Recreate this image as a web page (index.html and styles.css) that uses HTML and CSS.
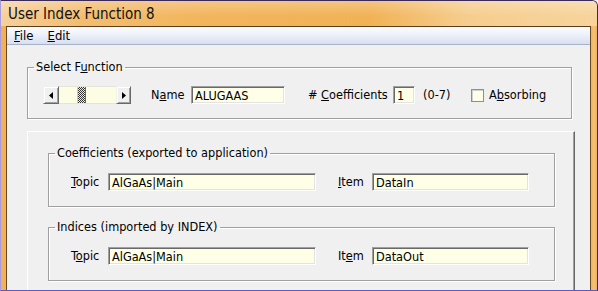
FILE: index.html
```html
<!DOCTYPE html>
<html>
<head>
<meta charset="utf-8">
<link rel="stylesheet" href="styles.css">
</head>
<body>
<div class="window">
  <div class="titlebar">User Index Function 8</div>
  <div class="frame">
    <div class="client">
      <div class="menubar">
        <span class="menu"><u>F</u>ile</span>
        <span class="menu"><u>E</u>dit</span>
      </div>
      <div class="content">
        <fieldset class="group select-group">
          <legend>Select F<u>u</u>nction</legend>
          <div class="row select-row">
            <div class="scrollbar">
              <div class="sb-btn sb-left"><svg width="4" height="7" viewBox="0 0 4 7"><path d="M4 0V7L0 3.5Z" fill="#000"/></svg></div>
              <div class="sb-track"><div class="sb-thumb"></div></div>
              <div class="sb-btn sb-right"><svg width="4" height="7" viewBox="0 0 4 7"><path d="M0 0V7L4 3.5Z" fill="#000"/></svg></div>
            </div>
            <span class="lbl lbl-name">N<u>a</u>me</span>
            <div class="field f-name">ALUGAAS</div>
            <span class="lbl lbl-coef"># <u>C</u>oefficients</span>
            <div class="field f-coef">1</div>
            <span class="lbl lbl-range">(0-7)</span>
            <span class="checkbox"></span>
            <span class="lbl lbl-abs">A<u>b</u>sorbing</span>
          </div>
        </fieldset>
        <div class="panel">
          <fieldset class="group sub-group">
            <legend>Coefficients (exported to application)</legend>
            <div class="row sub-row">
              <span class="lbl lbl-topic"><u>T</u>opic</span>
              <div class="field f-topic">AlGaAs|Main</div>
              <span class="lbl lbl-item"><u>I</u>tem</span>
              <div class="field f-item">DataIn</div>
            </div>
          </fieldset>
          <fieldset class="group sub-group second">
            <legend>Indices (imported by INDEX)</legend>
            <div class="row sub-row">
              <span class="lbl lbl-topic">T<u>o</u>pic</span>
              <div class="field f-topic">AlGaAs|Main</div>
              <span class="lbl lbl-item">It<u>e</u>m</span>
              <div class="field f-item">DataOut</div>
            </div>
          </fieldset>
        </div>
      </div>
    </div>
  </div>
</div>
</body>
</html>
```
FILE: styles.css
```css
* { box-sizing: border-box; }
html, body { margin: 0; padding: 0; }
body {
  width: 598px;
  height: 291px;
  overflow: hidden;
  background: #f0f0f0;
  font-family: "DejaVu Sans Condensed", "DejaVu Sans", sans-serif;
  font-size: 12.6px;
  color: #000;
}
u { text-decoration: underline; text-underline-offset: 1px; }

.window {
  width: 598px;
  height: 291px;
  display: flex;
  flex-direction: column;
  background: #f2b157;
  border-top: 1px solid #3a2a5a;
  border-left: 1px solid #a99be0;
  border-right: 1px solid #3a2a5a;
  border-bottom: 1px solid #5a5ad4;
  border-top-right-radius: 6px;
  overflow: hidden;
}

.titlebar {
  height: 25px;
  flex: none;
  padding-left: 7px;
  padding-top: 4px;
  font-size: 15px;
  line-height: 18px;
  color: #111;
  background:
    linear-gradient(to bottom, rgba(255,255,255,0.25), rgba(255,255,255,0) 60%),
    linear-gradient(100deg, #f6d19f 0%, #f3bd70 14%, #f2b55c 35%, #f1b256 62%, #f6cd8e 78%, #f7d49c 100%);
}

.frame {
  flex: 1;
  display: flex;
  padding: 0 6px 0 5px;
  background: linear-gradient(to right, #f2b157 0, #f2b157 6px, #f2b157 calc(100% - 6px), #f4c27a calc(100% - 3px), #f2b157 100%);
  min-height: 0;
}

.client {
  flex: 1;
  display: flex;
  flex-direction: column;
  background: #f0f0f0;
  border-top: 1px solid #5b3d1c;
  border-left: 1px solid #6b4a22;
  border-right: 1px solid #6b4a22;
  min-height: 0;
  overflow: hidden;
}

.menubar {
  height: 18px;
  flex: none;
  display: flex;
  align-items: center;
  padding-left: 7px;
  gap: 14px;
  font-size: 13px;
  background: linear-gradient(to bottom, #fbfcfe 0%, #eef1f9 45%, #d7dff0 100%);
  border-bottom: 1px solid #a8b2c8;
}
.menu { line-height: 16px; }

.content {
  padding: 14px 15px 0 20px;
}

.group {
  margin: 0;
  padding: 0;
  border: 1px solid #a0a0a0;
  box-shadow: inset 1px 1px 0 #fff, 1px 1px 0 #fff;
  min-width: 0;
}
.group legend {
  padding: 0 2px;
  margin-left: 6px;
  line-height: 16px;
}

.select-group { margin-right: 3px; }

.row {
  display: flex;
  align-items: center;
}
.select-row { padding: 11px 0 14px 15px; }

.scrollbar {
  display: flex;
  width: 88px;
  height: 18px;
  flex: none;
}
.sb-btn {
  width: 16px;
  height: 18px;
  flex: none;
  display: flex;
  align-items: center;
  justify-content: center;
  background: #f0f0f0;
  border-top: 1px solid #f0f0f0;
  border-left: 1px solid #f0f0f0;
  border-right: 1px solid #696969;
  border-bottom: 1px solid #696969;
  box-shadow: inset 1px 1px 0 #fff, inset -1px -1px 0 #a0a0a0;
}
.sb-right { width: 15px; }
.sb-track {
  flex: 1;
  background: #fdfde3;
  border-top: 1px solid #e4e4d8;
  border-bottom: 1px solid #e4e4d8;
  padding-left: 18px;
}
.sb-thumb {
  width: 9px;
  height: 16px;
  border-left: 1px solid #c8c8c8;
  border-right: 1px solid #696969;
  background: repeating-conic-gradient(#333 0 25%, #e8e8e8 0 50%) 0 0 / 2px 2px;
}

.lbl { white-space: nowrap; line-height: 16px; flex: none; }
.lbl-name { width: 40px; margin-left: 20px; }
.lbl-coef { width: 85px; margin-left: 23px; }
.lbl-range { margin-left: 8px; width: 48px; }
.lbl-abs { margin-left: 5px; }

.field {
  height: 18px;
  flex: none;
  background: #ffffe8;
  border-top: 1px solid #a0a0a0;
  border-left: 1px solid #a0a0a0;
  border-right: 1px solid #fff;
  border-bottom: 1px solid #fff;
  box-shadow: inset 1px 1px 0 #696969, inset -1px -1px 0 #e3e3e3;
  padding: 1px 0 0 3px;
  line-height: 15px;
  white-space: nowrap;
}
.f-name { width: 94px; }
.f-coef { width: 22px; }
.f-topic { width: 208px; }
.f-item { width: 157px; }

.checkbox {
  width: 13px;
  height: 13px;
  flex: none;
  background: #fefee9;
  border: 1px solid #8e8f8f;
  box-shadow: inset 1px 1px 0 #d0d0d0;
}

.panel {
  margin-top: 12px;
  margin-right: 0;
  height: 200px;
  padding: 13px 19px 0 20px;
  border-top: 1px solid #fff;
  border-left: 1px solid #fff;
  border-right: 1px solid #696969;
  box-shadow: inset -1px 0 0 #a0a0a0;
}
.sub-group.second { margin-top: 12px; }
.sub-row { padding: 12px 0 15px 22px; }
.lbl-topic { width: 37px; }
.lbl-item { width: 34px; margin-left: 22px; }
```
